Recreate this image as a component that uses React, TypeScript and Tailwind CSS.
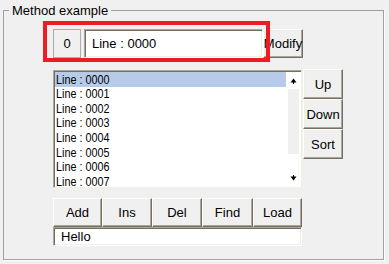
import React from "react";

const lines = ["0000", "0001", "0002", "0003", "0004", "0005", "0006", "0007"];

const Btn = ({
  label,
  className = "",
}: {
  label: string;
  className?: string;
}) => (
  <div
    className={`flex items-center justify-center bg-[#f0f0f0] border border-t-white border-l-white border-r-[#716f64] border-b-[#716f64] shadow-[inset_-1px_-1px_0_#aca899,inset_1px_1px_0_#f1efe2] text-[13px] text-black leading-none ${className}`}
  >
    {label}
  </div>
);

const Edit = ({
  value,
  className = "",
}: {
  value: string;
  className?: string;
}) => (
  <div
    className={`flex items-center bg-white border border-t-[#aca899] border-l-[#aca899] border-r-white border-b-white shadow-[inset_1px_1px_0_#716f64,inset_-1px_-1px_0_#f1efe2] text-[13px] text-black leading-none ${className}`}
  >
    {value}
  </div>
);

export default function App() {
  return (
    <div className="relative w-[389px] h-[264px] bg-[#f0f0f0] pt-[10px] pl-[3px] font-['Liberation_Sans',Arial,sans-serif] overflow-hidden">
      <div className="relative w-[381px] h-[250px] border border-[#a0a0a0] shadow-[1px_1px_0_#fff] pt-[18px] pl-[49px]">
        <span className="absolute left-[5px] top-[-8px] px-[3px] bg-[#f0f0f0] text-[13px] leading-[15px] text-black">
          Method example
        </span>

        {/* top row */}
        <div className="flex h-[29px]">
          <div className="w-[28px] h-full flex items-center justify-center border border-[#adadad] bg-[#f0f0f0] text-[13px] text-black">
            0
          </div>
          <Edit value="Line : 0000" className="ml-[3px] w-[179px] h-full pl-[7px]" />
          <Btn label="Modify" className="w-[40px] h-full" />
        </div>

        {/* list + side buttons */}
        <div className="flex items-start mt-[11px]">
          <div className="mt-[1px] w-[249px] h-[118px] flex bg-white border border-t-[#aca899] border-l-[#aca899] border-r-[#f1efe2] border-b-[#f1efe2] shadow-[inset_1px_1px_0_#716f64] pt-[1px] pl-[1px] overflow-hidden">
            <div className="flex-1 flex flex-col">
              {lines.map((n, i) => (
                <div
                  key={n}
                  className={`h-[14.57px] shrink-0 flex items-center pl-[1px] text-black leading-none ${
                    i === 0 ? "bg-[#b7cbe9]" : ""
                  }`}
                >
                  <span className="inline-block text-[13px] scale-x-[0.83] origin-left whitespace-nowrap">
                    Line : {n}
                  </span>
                </div>
              ))}
            </div>
            <div className="w-[15px] flex flex-col items-center">
              <div className="h-[17px] w-full flex items-center justify-center">
                <svg width="7" height="6" viewBox="0 0 7 6">
                  <path d="M3.5 0.5 L6.5 4.5 L0.5 4.5 Z" fill="#000" />
                  <rect x="3" y="4" width="1" height="2" fill="#000" />
                </svg>
              </div>
              <div className="w-[11px] h-[65px] bg-[#f0f0f0]" />
              <div className="flex-1" />
              <div className="h-[19px] w-full flex items-center justify-center">
                <svg width="7" height="6" viewBox="0 0 7 6">
                  <path d="M0.5 1.5 L6.5 1.5 L3.5 5.5 Z" fill="#000" />
                  <rect x="3" y="0" width="1" height="2" fill="#000" />
                </svg>
              </div>
            </div>
          </div>
          <div className="ml-[1px] flex flex-col">
            <Btn label="Up" className="w-[40px] h-[30px]" />
            <Btn label="Down" className="w-[40px] h-[30px]" />
            <Btn label="Sort" className="w-[40px] h-[30px]" />
          </div>
        </div>

        {/* bottom row */}
        <div className="flex mt-[10px]">
          <Btn label="Add" className="w-[49px] h-[29px]" />
          <Btn label="Ins" className="w-[50px] h-[29px]" />
          <Btn label="Del" className="w-[50px] h-[29px]" />
          <Btn label="Find" className="w-[51px] h-[29px]" />
          <Btn label="Load" className="w-[49px] h-[29px]" />
        </div>
        <Edit value="Hello" className="w-[249px] h-[19px] pl-[7px]" />
      </div>

      {/* red highlight */}
      <div className="absolute left-[43px] top-[21px] w-[227px] h-[41px] border-[4px] border-[#ed1c24] pointer-events-none" />
    </div>
  );
}
